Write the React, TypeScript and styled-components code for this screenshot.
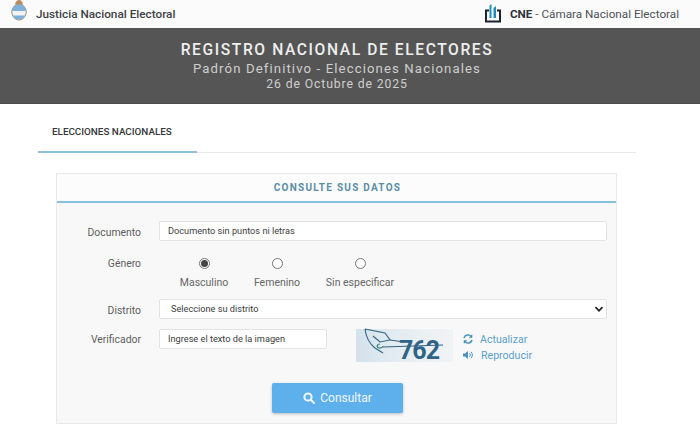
import React from "react";
import styled, { createGlobalStyle } from "styled-components";

const Global = createGlobalStyle`
  html, body { margin: 0; padding: 0; background: #fff; }
  body { width: 700px; height: 424px; overflow: hidden; font-family: Roboto, "Liberation Sans", sans-serif; color: #555; }
  * { box-sizing: border-box; }
`;

const Page = styled.div`
  width: 700px;
  height: 424px;
  overflow: hidden;
`;
const TopBar = styled.header`
  height: 28px;
  background: #fbfbfb;
  display: flex;
  align-items: center;
  justify-content: space-between;
  padding: 0 21px 0 11px;
`;
const Brand = styled.div`
  display: flex;
  align-items: center;
`;
const BrandLeftText = styled.span`
  margin-left: 9px;
  font-size: 11.75px;
  font-weight: 500;
  color: #3f4146;
  margin-top: -1px;
`;
const BrandRightText = styled.span`
  margin-left: 9px;
  font-size: 11.7px;
  color: #4c5058;
  margin-top: -1px;
  b { font-weight: 700; color: #2f3338; }
`;
const Banner = styled.section`
  height: 76px;
  background: #555555;
  border-bottom: 1px solid #4d4d4d;
  display: flex;
  flex-direction: column;
  align-items: center;
  padding: 13px 26px 0 0;
  text-align: center;
`;
const BannerTitle = styled.h1`
  margin: 0;
  font-size: 15.6px;
  line-height: 18px;
  font-weight: 500;
  letter-spacing: 1.6px;
  color: #eeeeee;
`;
const BannerSub = styled.div`
  margin-top: 1px;
  font-size: 13.2px;
  line-height: 17px;
  letter-spacing: 1.1px;
  color: #cfcfcf;
`;
const BannerDate = styled.div`
  font-size: 12.2px;
  line-height: 15px;
  letter-spacing: 0.9px;
  color: #cfcfcf;
`;
const Content = styled.main`
  padding: 0 64px 0 38px;
`;
const Tabs = styled.nav`
  height: 49px;
  border-bottom: 1px solid #e8e8e8;
  display: flex;
`;
const Tab = styled.div`
  width: 159px;
  height: 49px;
  border-bottom: 2px solid #8fc0d8;
  padding: 21px 0 0 14px;
  font-size: 9.85px;
  line-height: 13px;
  font-weight: 500;
  color: #35373a;
`;
const Card = styled.section`
  margin: 20px 0 0 18px;
  width: 561px;
  height: 251px;
  background: #f8f8f8;
  border: 1px solid #e9e9e9;
`;
const CardHead = styled.div`
  height: 29px;
  border-bottom: 2px solid #86c1e0;
  background: #fcfcfc;
  text-align: center;
  font-size: 10px;
  line-height: 28px;
  font-weight: 700;
  letter-spacing: 1.25px;
  padding-left: 2px;
  color: #5b8ea6;
`;
const Form = styled.div`
  display: grid;
  grid-template-columns: 84px 448px;
  column-gap: 18px;
  padding: 18px 0 0 0;
`;
const Label = styled.div<{ $mt: number }>`
  margin-top: ${(p) => p.$mt}px;
  text-align: right;
  font-size: 10.4px;
  line-height: 14px;
  color: #5d5d5d;
`;
const Field = styled.div`
  height: 20px;
  background: #fff;
  border: 1px solid #e3e3e3;
  border-radius: 2px;
  padding-left: 8px;
  font-size: 9.2px;
  line-height: 18px;
  color: #3d3d3d;
`;
const GenderRow = styled.div`
  height: 58px;
  display: flex;
  padding-top: 17px;
`;
const Option = styled.div<{ $w: number }>`
  width: ${(p) => p.$w}px;
  display: flex;
  flex-direction: column;
  align-items: center;
  font-size: 10.5px;
  line-height: 14px;
  color: #666;
`;
const Radio = styled.span<{ $on?: boolean }>`
  width: 11px;
  height: 11px;
  border-radius: 50%;
  border: 1px solid #767676;
  background: #fff;
  margin-bottom: 7px;
  display: flex;
  align-items: center;
  justify-content: center;
  &::after {
    content: "";
    display: ${(p) => (p.$on ? "block" : "none")};
    width: 7px;
    height: 7px;
    border-radius: 50%;
    background: #444;
  }
`;
const SelectBox = styled(Field)`
  display: flex;
  align-items: center;
  justify-content: space-between;
  padding: 0 2px 0 11px;
`;
const VerifyRow = styled.div`
  display: flex;
  margin-top: 10px;
  height: 34px;
`;
const ShortField = styled(Field)`
  width: 168px;
`;
const Captcha = styled.div`
  margin-left: 29px;
  width: 97px;
  height: 33px;
  background: linear-gradient(90deg, #d3e2ec 0%, #e5edf2 45%, #f1f3f4 100%);
  svg { display: block; overflow: visible; }
`;
const Links = styled.div`
  margin-left: 10px;
  display: flex;
  flex-direction: column;
  gap: 2px;
  margin-top: 3px;
`;
const LinkRow = styled.div<{ $gap: number }>`
  display: flex;
  align-items: center;
  gap: ${(p) => p.$gap}px;
  height: 14px;
  font-size: 10.6px;
  color: #5ba0c9;
`;
const ButtonRow = styled.div`
  display: flex;
  justify-content: center;
  margin: 20px 0 0 2px;
`;
const Button = styled.div`
  width: 131px;
  height: 30px;
  background: #5db0ec;
  border-radius: 2px;
  box-shadow: 0 1px 3px rgba(0, 0, 0, 0.25);
  display: flex;
  align-items: center;
  justify-content: center;
  gap: 5px;
  color: #f2f8fd;
  font-size: 12px;
`;

const Shield = () => (
  <svg width="16" height="21" viewBox="0 0 16 21" style={{ marginTop: -7 }}>
    <ellipse cx="8" cy="12" rx="7.2" ry="8" fill="#f3f3f3" stroke="#8d9180" strokeWidth="1" />
    <path d="M1.4 11h13.2v-1C14 6.5 11 4.5 8 4.5S2 6.5 1.4 10z" fill="#7fb0dc" />
    <path d="M2 15.5h12C13 18 10.5 19.5 8 19.5S3 18 2 15.5z" fill="#7fb0dc" />
    <path d="M4 4.5C4.5 1.5 6 0 8 0s3.5 1.5 4 4.5z" fill="#b98a62" />
  </svg>
);
const CneLogo = () => (
  <svg width="16" height="20" viewBox="0 0 16 20" style={{ marginTop: -3 }}>
    <path d="M4 7.5H1v11h14v-11h-3" fill="none" stroke="#1d2429" strokeWidth="2" />
    <path d="M4.5 15V2.5L6.5 1v14zM8.5 15V5L11 3v12z" fill="#1f8fb8" />
  </svg>
);
const Search = () => (
  <svg width="12" height="12" viewBox="0 0 12 12" fill="none" stroke="#f2f8fd" strokeWidth="2">
    <circle cx="5" cy="5" r="3.6" />
    <path d="M7.8 7.8 11 11" strokeLinecap="round" />
  </svg>
);
const Refresh = () => (
  <svg width="10" height="10" viewBox="0 0 10 10" fill="none" stroke="#4a93bf" strokeWidth="1.6">
    <path d="M1 4a4 4 0 0 1 7-1.5" />
    <path d="M9 6a4 4 0 0 1-7 1.5" />
    <path d="M9 .6v3H6M1 9.4v-3h3" fill="#4a93bf" strokeWidth=".6" />
  </svg>
);
const Speaker = () => (
  <svg width="11" height="10" viewBox="0 0 11 10" fill="none">
    <path d="M0 3.5h2L5 1v8L2 6.5H0z" fill="#4a93bf" />
    <path d="M6.5 3.2a2.5 2.5 0 0 1 0 3.6M8 1.8a4.5 4.5 0 0 1 0 6.4" stroke="#4a93bf" strokeWidth="1" />
  </svg>
);
const Chevron = () => (
  <svg width="10" height="10" viewBox="0 0 10 10" fill="none" stroke="#222" strokeWidth="1.8">
    <path d="M1.5 3.2 5 6.8l3.5-3.6" />
  </svg>
);
const CaptchaArt = () => (
  <svg width="97" height="33" viewBox="0 0 97 33">
    <path d="M9 0 29 4l5 7-10 2-7-6M9 0c1 8 5 15 10 19l8 5" fill="none" stroke="#33627f" strokeWidth="1.1" />
    <path d="M24 15c-3 0-4 3-1 4 2 0 4-1 4-2" fill="none" stroke="#3a7d78" strokeWidth="1.2" />
    <text x="43" y="30" fontFamily="Roboto, sans-serif" fontWeight="700" fontSize="25" fill="#2f6488" letterSpacing="-1">762</text>
    <path d="M27 18 87 16M34 11l14 2" stroke="#33627f" strokeWidth="1" fill="none" />
  </svg>
);

export default function App() {
  return (
    <Page>
      <Global />
      <TopBar>
        <Brand>
          <Shield />
          <BrandLeftText>Justicia Nacional Electoral</BrandLeftText>
        </Brand>
        <Brand>
          <CneLogo />
          <BrandRightText><b>CNE</b> - Cámara Nacional Electoral</BrandRightText>
        </Brand>
      </TopBar>
      <Banner>
        <BannerTitle>REGISTRO NACIONAL DE ELECTORES</BannerTitle>
        <BannerSub>Padrón Definitivo - Elecciones Nacionales</BannerSub>
        <BannerDate>26 de Octubre de 2025</BannerDate>
      </Banner>
      <Content>
        <Tabs>
          <Tab>ELECCIONES NACIONALES</Tab>
        </Tabs>
        <Card>
          <CardHead>CONSULTE SUS DATOS</CardHead>
          <Form>
            <Label $mt={5}>Documento</Label>
            <Field>Documento sin puntos ni letras</Field>
            <Label $mt={16}>Género</Label>
            <GenderRow>
              <Option $w={90}><Radio $on />Masculino</Option>
              <Option $w={56}><Radio />Femenino</Option>
              <Option $w={110}><Radio />Sin especificar</Option>
            </GenderRow>
            <Label $mt={5}>Distrito</Label>
            <SelectBox>Seleccione su distrito<Chevron /></SelectBox>
            <Label $mt={14}>Verificador</Label>
            <VerifyRow>
              <ShortField>Ingrese el texto de la imagen</ShortField>
              <Captcha><CaptchaArt /></Captcha>
              <Links>
                <LinkRow $gap={7}><Refresh />Actualizar</LinkRow>
                <LinkRow $gap={7}><Speaker />Reproducir</LinkRow>
              </Links>
            </VerifyRow>
          </Form>
          <ButtonRow>
            <Button><Search />Consultar</Button>
          </ButtonRow>
        </Card>
      </Content>
    </Page>
  );
}
